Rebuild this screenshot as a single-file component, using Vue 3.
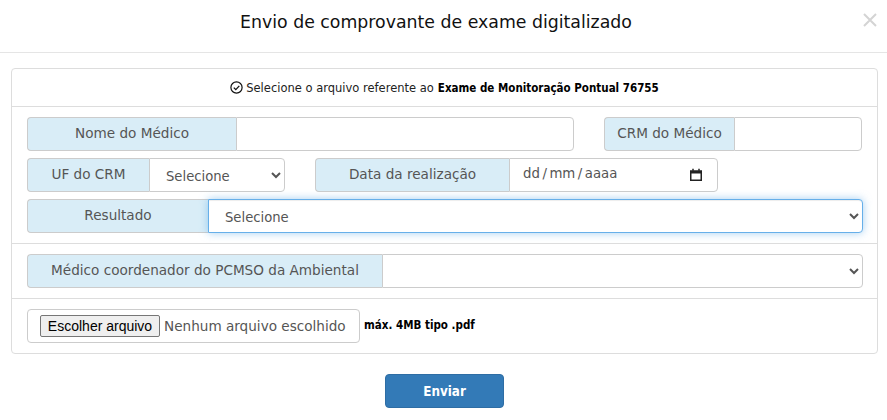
<template>
  <div class="modal">
    <header class="modal-header">
      <h4>Envio de comprovante de exame digitalizado</h4>
      <button class="close" aria-label="Fechar">
        <svg width="14" height="14" viewBox="0 0 14 14" fill="none" stroke="currentColor" stroke-width="2">
          <path d="M1 1l12 12M13 1L1 13" />
        </svg>
      </button>
    </header>

    <div class="modal-body">
      <section class="panel">
        <div class="panel-heading">
          <svg class="check" width="13" height="13" viewBox="0 0 13 13" fill="none" stroke="currentColor">
            <circle cx="6.5" cy="6.5" r="5.6" stroke-width="1.2" />
            <path d="M3.8 6.6l2 2 3.5-3.7" stroke-width="1.3" />
          </svg>
          <span>Selecione o arquivo referente ao</span>
          <b>Exame de Monitoração Pontual 76755</b>
        </div>

        <div class="panel-row fields">
          <div class="line">
            <div class="group w-547">
              <label class="addon w-209">Nome do Médico</label>
              <input class="control" type="text" />
            </div>
            <div class="group w-258">
              <label class="addon w-130">CRM do Médico</label>
              <input class="control" type="text" />
            </div>
          </div>

          <div class="line">
            <div class="group w-258">
              <label class="addon w-122">UF do CRM</label>
              <select class="control">
                <option>Selecione</option>
              </select>
            </div>
            <div class="group w-403">
              <label class="addon w-194">Data da realização</label>
              <div class="control date">
                <span>dd</span><i>/</i><span>mm</span><i>/</i><span>aaaa</span>
                <svg class="calendar" width="14" height="14" viewBox="0 0 14 14" fill="none" stroke="#222">
                  <path d="M1.75 3h10.5v9.25H1.75z" stroke-width="1.5" />
                  <path d="M1.75 4.25h10.5" stroke-width="2.5" />
                  <path d="M4 .8v2M10 .8v2" stroke-width="1.5" />
                </svg>
              </div>
            </div>
          </div>

          <div class="group wide">
            <label class="addon w-181">Resultado</label>
            <select class="control focused">
              <option>Selecione</option>
            </select>
          </div>
        </div>

        <div class="panel-row">
          <div class="group wide">
            <label class="addon w-355">Médico coordenador do PCMSO da Ambiental</label>
            <select class="control">
              <option></option>
            </select>
          </div>
        </div>

        <div class="panel-row upload">
          <div class="file">
            <button class="file-btn" type="button">Escolher arquivo</button>
            <span>Nenhum arquivo escolhido</span>
          </div>
          <b class="hint">máx. 4MB tipo .pdf</b>
        </div>
      </section>

      <div class="actions">
        <button class="send" type="button">Enviar</button>
      </div>
    </div>
  </div>
</template>

<script setup>
</script>

<style scoped>
.modal {
  width: 887px;
  height: 420px;
  background: #fff;
  font-family: "DejaVu Sans", Verdana, sans-serif;
  color: #555;
  box-sizing: border-box;
  overflow: hidden;
}

.modal-header {
  position: relative;
  height: 53px;
  box-sizing: border-box;
  border-bottom: 1px solid #e5e5e5;
  display: flex;
  justify-content: center;
  padding: 11px 15px 0 0;
}

.modal-header h4 {
  margin: 0;
  font-size: 17.33px;
  line-height: 22px;
  font-weight: 400;
  color: #111;
}

.close {
  position: absolute;
  top: 13px;
  right: 10px;
  padding: 0;
  border: 0;
  background: none;
  color: #d4d4d4;
  line-height: 0;
}

.modal-body {
  padding: 15px 9px 0 11px;
}

.panel {
  border: 1px solid #ddd;
  border-radius: 4px;
}

.panel-heading {
  height: 37px;
  display: flex;
  align-items: center;
  justify-content: center;
  gap: 3px;
  font-size: 11.5px;
  color: #222;
  border-bottom: 1px solid #ddd;
}

.panel-heading b {
  color: #000;
  margin-left: 1px;
  font-family: "DejaVu Sans Condensed", "DejaVu Sans", sans-serif;
}

.check {
  color: #111;
}

.panel-row {
  padding: 10px 15px;
  border-bottom: 1px solid #ddd;
}

.panel-row:last-child {
  border-bottom: 0;
}

.fields {
  display: flex;
  flex-direction: column;
  gap: 7px;
}

.line {
  display: flex;
  gap: 30px;
}

.group {
  display: flex;
  height: 34px;
  font-size: 13.6px;
}

.wide {
  margin-right: -1px;
}

.w-547 { width: 547px; }
.w-258 { width: 258px; }
.w-403 { width: 403px; }

.addon {
  flex: none;
  box-sizing: border-box;
  display: flex;
  align-items: center;
  justify-content: center;
  padding-bottom: 2px;
  background: #d9edf7;
  border: 1px solid #ccc;
  border-right: 0;
  border-radius: 4px 0 0 4px;
  color: #555;
}

.w-209 { width: 209px; }
.w-130 { width: 130px; }
.w-122 { width: 122px; }
.w-194 { width: 194px; }
.w-181 { width: 181px; }
.w-355 { width: 355px; }

.control {
  flex: 1;
  min-width: 0;
  box-sizing: border-box;
  height: 34px;
  padding: 7px 12px 5px;
  background: #fff;
  border: 1px solid #ccc;
  border-radius: 0 4px 4px 0;
  font: inherit;
  font-size: 13.2px;
  color: #555;
  outline: none;
}

.focused {
  border-color: #66afe9;
  box-shadow: inset 0 1px 1px rgba(0, 0, 0, .075), 0 0 8px rgba(102, 175, 233, .6);
  position: relative;
}

.date {
  display: flex;
  align-items: center;
  position: relative;
  padding: 5px 12px 9px 13px;
  font-size: 13.3px;
}

.date i {
  font-style: normal;
  padding: 0 2.5px;
}

.calendar {
  position: absolute;
  right: 14px;
  top: 9px;
}

.upload {
  display: flex;
  gap: 4px;
}

.file {
  box-sizing: border-box;
  width: 333px;
  height: 34px;
  display: flex;
  align-items: center;
  gap: 4px;
  padding-left: 12px;
  border: 1px solid #ccc;
  border-radius: 4px;
  font-size: 13.6px;
}

.file-btn {
  width: 120px;
  height: 22px;
  padding: 0;
  font-family: "Liberation Sans", Arial, sans-serif;
  font-size: 14px;
  color: #000;
  background: #efefef;
  border: 1px solid #767676;
  border-radius: 2px;
}

.hint {
  font-family: "DejaVu Sans Condensed", "DejaVu Sans", sans-serif;
  font-size: 11.5px;
  color: #000;
  margin-top: 9px;
}

.actions {
  display: flex;
  justify-content: center;
  padding-top: 20px;
}

.send {
  width: 119px;
  height: 34px;
  background: #337ab7;
  border: 1px solid #2e6da4;
  border-radius: 4px;
  color: #fff;
  font-family: "DejaVu Sans Condensed", "DejaVu Sans", sans-serif;
  font-size: 13.3px;
  font-weight: 700;
}
</style>
